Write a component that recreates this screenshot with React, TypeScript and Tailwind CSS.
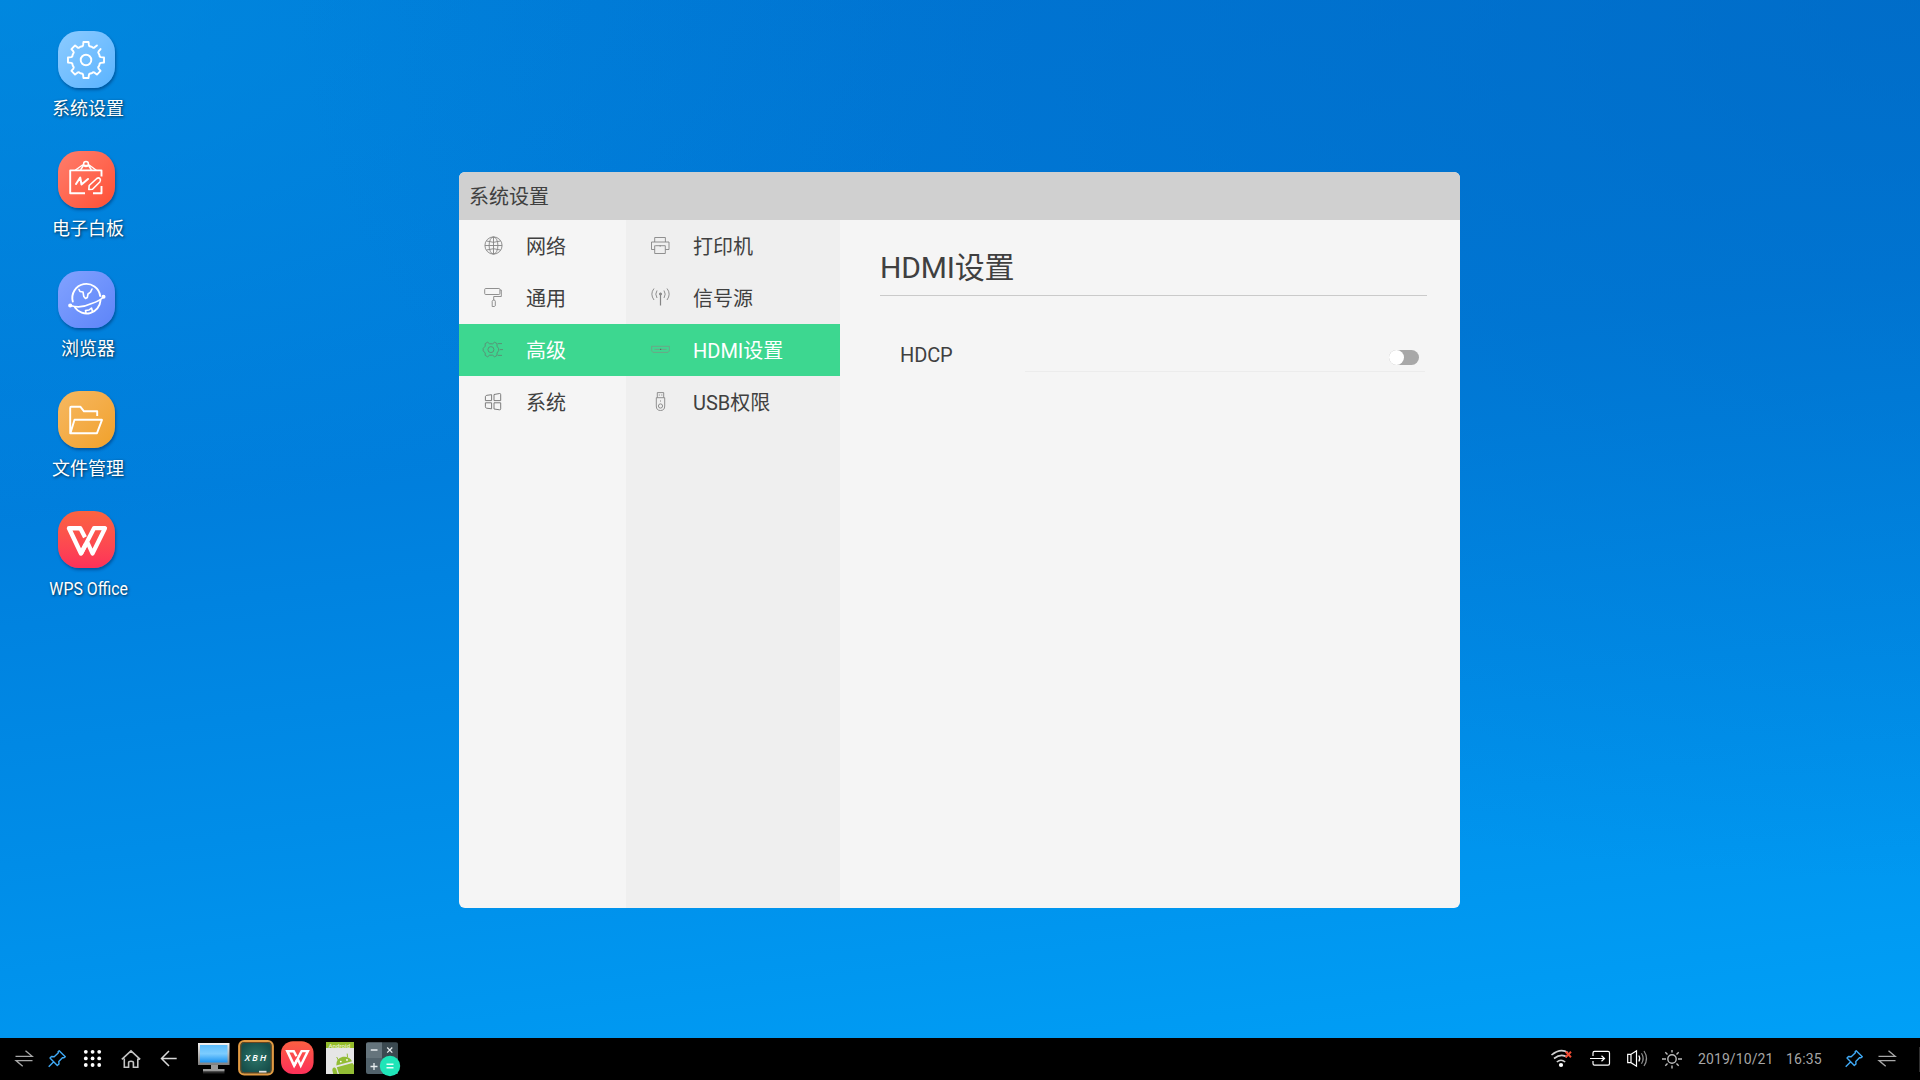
import React from "react";

type IconProps = { children: React.ReactNode };

function gearPath(cx: number, cy: number, teeth: number, outer: number, inner: number, start: number, open: boolean) {
  const step = (Math.PI * 2) / teeth;
  const pt = (r: number, a: number) => `${(cx + r * Math.cos(a)).toFixed(2)} ${(cy + r * Math.sin(a)).toFixed(2)}`;
  let d = `M${pt(outer, start + step * 0.18)}`;
  for (let i = 0; i < teeth; i++) {
    const a = start + i * step;
    d += `L${pt(inner + 1, a + step * 0.24)}Q${pt(inner - 0.6, a + step * 0.3)} ${pt(inner, a + step * 0.42)}`;
    d += `L${pt(inner, a + step * 0.58)}Q${pt(inner - 0.6, a + step * 0.7)} ${pt(inner + 1, a + step * 0.76)}`;
    d += `L${pt(outer, a + step * 0.82)}`;
    if (i < teeth - 1) d += `L${pt(outer, a + step * 1.18)}`;
  }
  return open ? d : d + "Z";
}

const desktopGear = gearPath(28, 29, 8, 18.2, 14.3, -Math.PI / 4, true);

function DesktopIcon({ label, tile, condensed, children }: { label: string; tile: string; condensed?: boolean; children: React.ReactNode }) {
  return (
    <div className="flex h-[120px] w-[176px] flex-col items-center">
      <div className={`mr-[3px] h-[57px] w-[57px] shrink-0 rounded-[21px] shadow-[1px_2px_3px_rgba(0,30,80,0.45)] ${tile}`}>
        <svg className="h-[57px] w-[57px]" viewBox="0 0 57 57" fill="none" stroke="#fff" strokeWidth="1.9" strokeLinecap="round" strokeLinejoin="round">
          {children}
        </svg>
      </div>
      <span
        className={`mt-[7px] text-[18px] leading-[28px] whitespace-nowrap text-white [text-shadow:1px_1px_3px_rgba(0,0,0,0.7)] ${condensed ? "ml-[2px] scale-x-[0.88]" : ""}`}
      >
        {label}
      </span>
    </div>
  );
}

function LineIcon({ children }: IconProps) {
  return (
    <svg className="h-[20px] w-[20px] shrink-0 overflow-visible" viewBox="0 0 20 20" fill="none" stroke="#858585" strokeWidth="0.9">
      {children}
    </svg>
  );
}

function MenuRow({ label, active, icon }: { label: string; active?: boolean; icon: React.ReactNode }) {
  return (
    <div className={`flex h-[52px] items-center pl-[24px] ${active ? "bg-[#3dd790] text-white" : "text-[#404040]"}`}>
      <LineIcon>{icon}</LineIcon>
      <span className="ml-[23px] pt-[2px] text-[20px] leading-[30px] whitespace-nowrap">{label}</span>
    </div>
  );
}

function Toggle() {
  return (
    <div className="flex h-[15px] w-[30px] rounded-full bg-[#a8a8a8]">
      <div className="h-[15px] w-[15px] rounded-full bg-white" />
    </div>
  );
}

function SwapIcon() {
  return (
    <svg className="h-[42px] w-8 shrink-0" viewBox="0 0 32 42" fill="none" stroke="#a8a8a8" strokeWidth="1.3">
      <path d="M7.5 18.3H24.2L17.5 12.7M24.5 22.6H8L14.7 28.3" />
    </svg>
  );
}

function PinIcon() {
  return (
    <svg className="h-[42px] w-[34px] shrink-0" viewBox="0 0 34 42" fill="none" stroke="#3fa9f5" strokeWidth="1.4" strokeLinejoin="round">
      <path d="M8.7 28.7L14 23.4M19.2 12.7L25.3 18.8L24 19.8L22.7 19.6L18.8 23.6L19 26L17.3 27.4L10 20L11.5 18.5L14.2 18.8L18.4 14.8L18.1 13.7Z" />
    </svg>
  );
}

function WpsMark() {
  return (
    <>
      <path d="M21 17.2H11L23 42.5L28 33" strokeWidth="4.4" strokeLinecap="butt" />
      <path d="M20.5 17.2H22.3L27 26.2M29.5 31.5L34.5 42.5L47 17.2H36L23 42.5" strokeWidth="4.2" strokeLinecap="butt" />
    </>
  );
}

export default function App() {
  return (
    <div className="flex h-[1080px] w-[1920px] flex-col overflow-hidden bg-black font-[Roboto,'Noto_Sans_CJK_SC',sans-serif]">
      <main className="flex min-h-0 flex-1 items-start bg-[radial-gradient(ellipse_at_100%_0%,rgba(0,98,188,0.55),rgba(0,98,188,0)_60%),radial-gradient(ellipse_at_0%_0%,rgba(0,146,228,0.6),rgba(0,146,228,0)_36%),linear-gradient(173deg,#0077d6_0%,#007edc_40%,#008de8_68%,#00a0f7_100%)]">
        <aside className="flex w-[176px] shrink-0 flex-col pt-[31px]">
          <DesktopIcon label="系统设置" tile="bg-linear-to-br from-[#8ccbff] to-[#59b3ff]">
            <path d={desktopGear} />
            <circle cx="28" cy="29" r="5.3" />
          </DesktopIcon>
          <DesktopIcon label="电子白板" tile="bg-linear-to-br from-[#ff7d6b] to-[#ff4e33]">
            <path d="M43.5 25.5V19.4H12.2V42.2H27M35 42.2H43.5V35" strokeLinecap="butt" />
            <path d="M17.5 19L24.5 14M38 19L31.2 14M22.8 18.5L25.5 14.5H30.5L33.2 18.5" strokeWidth="1.4" />
            <circle cx="28" cy="13" r="2.4" strokeWidth="1.5" />
            <path d="M18 33L22.2 26.5L23.5 33.5L30 28" strokeWidth="2" />
            <path d="M30.8 38.5L31.2 34.5L38.8 27.5Q40.6 26.2 42 27.7Q43.2 29.3 41.8 31L34.5 38.3Z" strokeWidth="1.6" />
          </DesktopIcon>
          <DesktopIcon label="浏览器" tile="bg-linear-to-br from-[#82a2ff] to-[#5d84f8]">
            <path d="M14.8 30.5A14 14 0 1 1 42.2 25M42.5 29.5A14 14 0 0 1 17 36.5" />
            <path d="M21 18.5L22 20.5L25 21L25.8 25.5L27.5 27.5L29.3 26.5L30 23L32.5 21.2L34 18M28 42L27.5 39.5L31 39L33.5 37L34.5 40.5" strokeWidth="1.6" />
            <path d="M12.5 34.5Q22 38 33 32.8Q43 29.5 45 26.2" strokeWidth="1.6" />
            <circle cx="12.2" cy="34.5" r="1.1" />
            <circle cx="45.5" cy="25.7" r="1.1" />
          </DesktopIcon>
          <DesktopIcon label="文件管理" tile="bg-linear-to-br from-[#f6b860] to-[#f1a127]">
            <path d="M39.2 25V20.3H26L22.5 15.8H13.2Q12.2 15.8 12.2 17V42.2H39L44 28.8H16.5L12.5 42" strokeLinecap="butt" />
          </DesktopIcon>
          <DesktopIcon label="WPS Office" condensed tile="bg-linear-to-b from-[#fb6340] to-[#fd3059]">
            <WpsMark />
          </DesktopIcon>
        </aside>

        <section className="mt-[172px] ml-[283px] flex h-[736px] w-[1001px] flex-col overflow-hidden rounded-[6px] bg-[#f5f5f5] text-[#404040]">
          <header className="flex h-[48px] shrink-0 items-center bg-[#d0d0d0] pt-[2px] pl-[10px] text-[20px]">系统设置</header>
          <div className="flex min-h-0 flex-1">
            <nav className="w-[167px] shrink-0">
              <MenuRow
                label="网络"
                icon={
                  <>
                    <circle cx="10.5" cy="9.5" r="8.6" />
                    <ellipse cx="10.5" cy="9.5" rx="4.4" ry="8.6" />
                    <path d="M10.5 1V18M2 9.5H19M3.5 5Q10.5 7.6 17.5 5M3.5 14Q10.5 11.4 17.5 14" />
                  </>
                }
              />
              <MenuRow
                label="通用"
                icon={
                  <>
                    <rect x="1.7" y="0.5" width="15.2" height="6" rx="1" />
                    <path d="M17 2H18.3V8.5H10.7V12M9.2 18.5V13.3L10.2 12H11.5L12.3 13.3V17.8Q11.8 18.5 11 18.5Z" />
                  </>
                }
              />
              <MenuRow
                label="高级"
                active
                icon={
                  <g stroke="#5c8a74" strokeLinejoin="round">
                    <path d="M4.6 2.2L6.6 3.8H9.6L11.6 2.2L14 3.6V6.2L15.6 8.6V10.6L14 13V15.4L11.6 16.8L9.6 15.2H6.6L4.6 16.8L2.2 15.4V13L0.2 10.8V8.4L2.2 6.2V3.6Z" />
                    <circle cx="7.9" cy="9.6" r="3" />
                    <path d="M14.8 3.6H19M16.8 9.6H20M14.8 15.4H19" />
                  </g>
                }
              />
              <MenuRow
                label="系统"
                icon={
                  <path
                    d="M2.4 4.6Q2.6 3.6 3.8 3.3L8.6 2.7V8.6H2.4ZM11 2.5L16.6 1.5Q17.7 1.4 17.7 2.6V8.6H11ZM2.4 10.8H8.6V16.8L3.6 16.2Q2.4 15.9 2.4 14.8ZM11 10.8H17.7V16.8Q17.7 17.9 16.6 17.8L11 17Z"
                    stroke="#6f6f6f"
                  />
                }
              />
            </nav>
            <nav className="w-[214px] shrink-0 bg-[#efefef]">
              <MenuRow
                label="打印机"
                icon={
                  <>
                    <path d="M4.7 6V1.5H15.4V6M4.7 13.5H1.5V6H19V13.5H15.4" />
                    <path d="M5.5 9.7H15.3V17.5H4.7V9.7ZM9.5 10H11" />
                  </>
                }
              />
              <MenuRow
                label="信号源"
                icon={
                  <>
                    <path d="M10.5 7V17.5" strokeWidth="1.2" />
                    <circle cx="10.5" cy="6" r="1.1" fill="#858585" />
                    <path d="M7 2.5Q4.6 6 7 10M14 2.5Q16.4 6 14 10M4 0.5Q-0.3 6 4 12M17 0.5Q21.3 6 17 12" />
                  </>
                }
              />
              <MenuRow
                label="HDMI设置"
                active
                icon={
                  <>
                    <path d="M1.6 6.3H19.4V10.8L18 12.4H3L1.6 10.8Z" stroke="#72a086" />
                    <path d="M4.5 9.4H16.5" stroke="#72a086" />
                    <path d="M10 9.4H11.2" stroke="#4a7a60" strokeWidth="1.2" />
                  </>
                }
              />
              <MenuRow
                label="USB权限"
                icon={
                  <>
                    <path d="M7.3 5.5V0.6H13.7V5.5M6.3 5.7H14.7V14Q14.7 18.5 10.5 18.5T6.3 14Z" />
                    <circle cx="10.5" cy="14" r="2.1" />
                    <path d="M8.8 3H9.8M11.3 3H12.3M10 9H11" strokeWidth="1.2" />
                  </>
                }
              />
            </nav>
            <div className="flex-1 pr-[33px] pl-[40px]">
              <h1 className="flex h-[76px] items-center border-b border-[#cacaca] pt-[20px] text-[30px] leading-[40px] tracking-[-0.2px]">HDMI设置</h1>
              <div className="mt-[48px] flex h-[28px] items-end pl-[20px]">
                <span className="w-[125px] pb-[3px] text-[20px] leading-[28px] tracking-[-0.1px]">HDCP</span>
                <div className="mr-[2px] flex h-[28px] flex-1 items-end justify-end border-b border-[#ececec] pr-[6px] pb-[6px]">
                  <Toggle />
                </div>
              </div>
            </div>
          </div>
        </section>
      </main>

      <footer className="flex h-[42px] shrink-0 bg-black pl-2">
        <SwapIcon />
        <PinIcon />
        <svg className="h-[42px] w-[37px] shrink-0" viewBox="0 0 37 42" fill="#fff">
          {[13.8, 20.4, 27].map((y) => [11.8, 18.6, 25.2].map((x) => <circle key={`${x}-${y}`} cx={x} cy={y} r="1.9" />))}
        </svg>
        <svg className="h-[42px] w-[40px] shrink-0" viewBox="0 0 40 42" fill="none" stroke="#c4c4c4" strokeWidth="1.6">
          <path d="M10.8 21.3L20 12.8L29.2 21.3M13.3 20.5V29.2H17.6V24.6Q17.6 23.2 20 23.2T22.4 24.6V29.2H26.8V20.5" />
        </svg>
        <svg className="h-[42px] w-[40px] shrink-0" viewBox="0 0 40 42" fill="none" stroke="#d8d8d8" strokeWidth="1.5">
          <path d="M25.7 20.5H11M18 13L10.5 20.5L18 28" />
        </svg>
        <svg className="h-[42px] w-[45px] shrink-0" viewBox="0 0 45 42">
          <defs>
            <linearGradient id="screen" x1="0" y1="0" x2="0" y2="1">
              <stop offset="0" stopColor="#5cbcfb" />
              <stop offset="0.5" stopColor="#7cccff" />
              <stop offset="1" stopColor="#1d93f0" />
            </linearGradient>
            <linearGradient id="bezel" x1="0" y1="0" x2="0" y2="1">
              <stop offset="0" stopColor="#f4f4f4" />
              <stop offset="1" stopColor="#7e7e7e" />
            </linearGradient>
          </defs>
          <rect x="7" y="5" width="31.5" height="22" fill="url(#bezel)" />
          <rect x="9" y="7" width="27.5" height="17.5" fill="url(#screen)" />
          <path d="M20 27H27V31H33.5V33.4H12V31H20Z" fill="#999" />
          <path d="M12 34.8H33.5" stroke="#3b3b3b" />
        </svg>
        <svg className="h-[42px] w-[42px] shrink-0" viewBox="0 0 42 42">
          <defs>
            <radialGradient id="chalkboard">
              <stop offset="0" stopColor="#2d7569" />
              <stop offset="1" stopColor="#174f4b" />
            </radialGradient>
          </defs>
          <rect x="3.2" y="3" width="33.6" height="33.4" rx="5" fill="url(#chalkboard)" stroke="#e29a42" strokeWidth="2.2" />
          <rect x="4.8" y="4.5" width="30.4" height="30.3" rx="3.5" fill="none" stroke="#6b451f" />
          <text x="20.4" y="23" textAnchor="middle" fill="#fff" fontSize="9.5" fontStyle="italic" fontWeight="600" letterSpacing="1.9" fontFamily="Open Sans">
            XBH
          </text>
          <path d="M23 33.7H30.5" stroke="#ddd" strokeWidth="1.8" />
        </svg>
        <svg className="h-[42px] w-[42px] shrink-0" viewBox="0 0 42 42">
          <defs>
            <linearGradient id="wps" x1="0" y1="0" x2="0" y2="1">
              <stop offset="0" stopColor="#fb5f42" />
              <stop offset="1" stopColor="#fd3059" />
            </linearGradient>
          </defs>
          <rect x="3" y="3.3" width="32.6" height="32.6" rx="12" fill="url(#wps)" />
          <g transform="translate(3 3.3) scale(0.572)" fill="none" stroke="#fff">
            <WpsMark />
          </g>
        </svg>
        <svg className="h-[42px] w-[40px] shrink-0" viewBox="0 0 40 42">
          <rect x="6" y="4" width="28" height="32" fill="#e6e6e6" />
          <rect x="6" y="4" width="28" height="6" fill="#94bc2c" />
          <text x="8.5" y="10.2" fontSize="6.2" fontWeight="500" fill="#e8f3c8">
            Android
          </text>
          <g fill="#93bd35">
            <path d="M18.5 22.5L16.7 19M27.5 19L27.2 15.6" stroke="#93bd35" />
            <path d="M16.3 27.6Q15.8 20.5 22.8 18.8Q29.4 17.8 32 23.2Z" />
            <path d="M16.8 29.2L32.4 25L34 27V36H19Z" />
            <path d="M13.8 29.5Q15.5 29 16.2 31L17.6 36H13.2L12.3 32Q12.2 30 13.8 29.5Z" />
          </g>
          <circle cx="20.8" cy="23.6" r="0.9" fill="#fff" />
          <circle cx="27" cy="21.9" r="0.9" fill="#fff" />
        </svg>
        <svg className="h-[42px] w-[44px] shrink-0" viewBox="0 0 44 42">
          <path d="M6 6Q6 4.3 8 4.3H22V20H6Z" fill="#65747c" />
          <path d="M22 4.3H36Q38 4.3 38 6V20H22Z" fill="#3b4950" />
          <path d="M6 20H22V36H8Q6 36 6 34Z" fill="#52626b" />
          <path d="M22 20H38V36H22Z" fill="#45545c" />
          <path d="M10.8 12H17.5M10.5 28.5H17.5M14 25V32M27.2 9.5L32.3 14.6M32.3 9.5L27.2 14.6" stroke="#e7ecee" strokeWidth="1.3" />
          <circle cx="30" cy="28" r="10.2" fill="#1fe5b8" />
          <path d="M26.5 26.3H33.5M26.5 29.8H33.5" stroke="#e8fff8" strokeWidth="1.5" />
        </svg>

        <div className="ml-auto flex items-center">
          <svg className="h-[42px] w-[36px]" viewBox="0 0 36 42" fill="none" stroke="#d0d0d0" strokeWidth="1.6">
            <path d="M7.5 17Q16.5 9.5 24 14.7M10 20.5Q17 15 23 19M12.8 24Q17 20.5 21.2 24" />
            <circle cx="17" cy="27" r="2.1" fill="#fff" stroke="none" />
            <path d="M21.7 13.8L27 19.2M27 13.8L21.7 19.2" stroke="#f04a32" strokeWidth="2" />
          </svg>
          <svg className="h-[42px] w-[40px]" viewBox="0 0 40 42" fill="none" stroke="#fff" strokeWidth="1.2">
            <path d="M13 18V15Q13 13.4 14.5 13.4H28Q29.5 13.4 29.5 15V25.6Q29.5 27.2 28 27.2H14.5Q13 27.2 13 25.6V23M10 20.5H24.5M21.5 17.8L24.5 20.5L21.5 23.2" />
          </svg>
          <svg className="h-[42px] w-[36px]" viewBox="0 0 36 42" fill="none" stroke="#fff" strokeWidth="1.2">
            <path d="M11 16.3H7.7V24.7H11L16.5 28.2V12.8L11 16.3V24.7" />
            <path d="M18.8 17.5Q20.8 20.5 18.8 23.5" />
            <path d="M21.5 15.2Q24.8 20.5 21.5 25.8M24 13Q29 20.5 24 28" stroke="#909090" />
          </svg>
          <svg className="h-[42px] w-[36px]" viewBox="4 0 36 42" fill="none" stroke="#bdbdbd" strokeWidth="1.4">
            <circle cx="20" cy="21" r="4.2" />
            <path d="M20 12V14.5M20 27.5V30.5M10 21H14M26 21H30M13.3 14.3L15.5 16.5M26.7 14.3L24.5 16.5M13.3 27.7L15.5 25.5M26.7 27.7L24.5 25.5" />
          </svg>
          <span className="ml-[6px] w-[88px] text-[14px] tracking-[0.1px] text-[#a6a6a6]">2019/10/21</span>
          <span className="w-[51px] text-[14px] tracking-[0.2px] text-[#a6a6a6]">16:35</span>
          <PinIcon />
          <SwapIcon />
          <div className="ml-[16px] h-[25px] w-px bg-[#303030]" />
        </div>
      </footer>
    </div>
  );
}
